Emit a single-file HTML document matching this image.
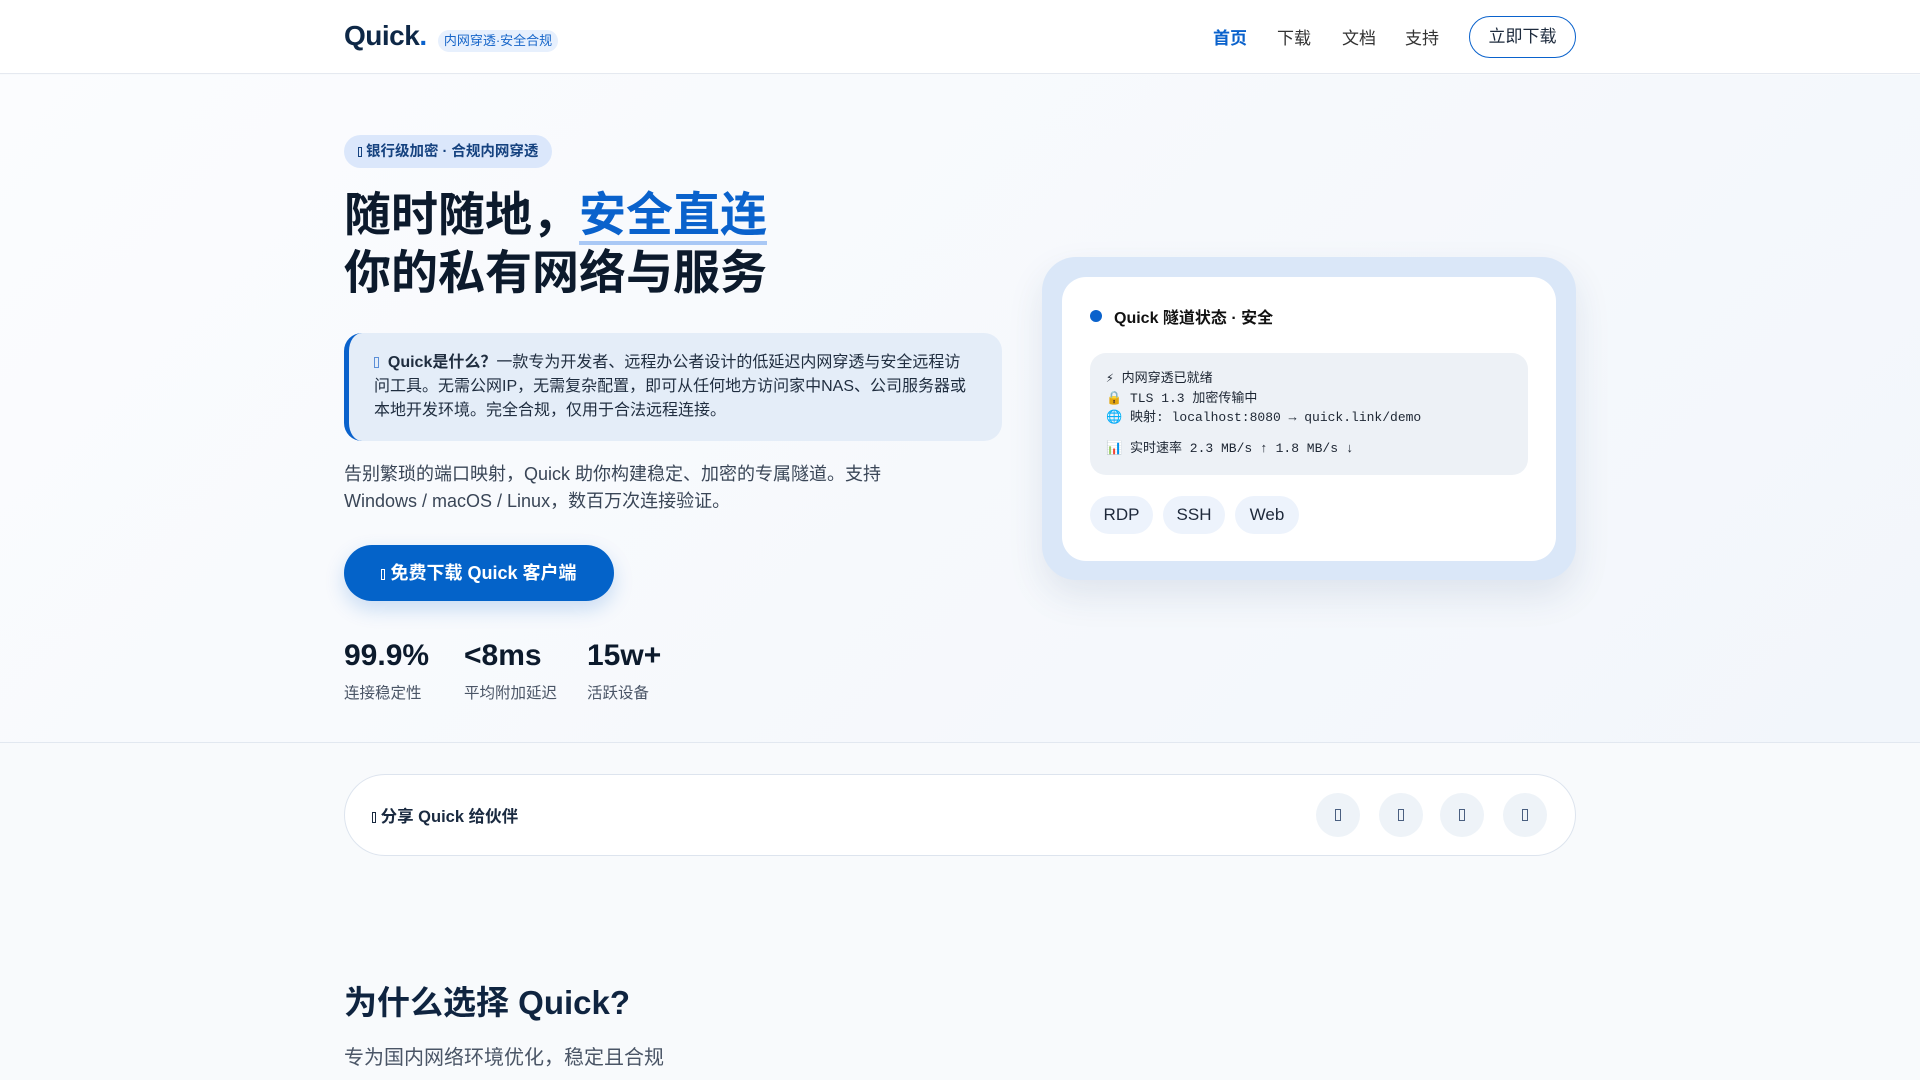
<!DOCTYPE html>
<html><head><meta charset="utf-8"><style>
*{margin:0;padding:0;box-sizing:border-box}
body{width:1920px;height:1080px;overflow:hidden;background:#f8fafc;font-family:"Liberation Sans","Noto Sans CJK SC",sans-serif;color:#0f1e33;position:relative}
.a{position:absolute;white-space:nowrap}
.hdr{position:absolute;left:0;top:0;width:1920px;height:74px;background:#fff;border-bottom:1px solid #e5e9f0}
.hero{position:absolute;left:0;top:75px;width:1920px;height:668px;background:linear-gradient(135deg,#fbfcfe,#f2f6fb);border-bottom:1px solid #e2e8f0}
.tofu{display:inline-block;width:6px;height:12px;border:1.5px solid currentColor;vertical-align:middle}
.pill{position:absolute;top:496px;height:38px;border-radius:19px;background:#edf3fc;font-size:17px;line-height:38px;text-align:center;color:#1e293b}
.circ{position:absolute;top:793px;width:44px;height:44px;border-radius:50%;background:#eef3f8;display:flex;align-items:center;justify-content:center;color:#4a5f80}
</style></head><body>
<div class="hdr"></div>
<div class="a" style="left:344px;top:20px;font-size:28px;font-weight:700;color:#0e2847;letter-spacing:-0.5px">Quick<span style="color:#0a62cc">.</span></div>
<div class="a" style="left:438px;top:30px;height:22px;width:120px;border-radius:11px;background:#e7f0fd;color:#1766c9;font-size:13px;line-height:22px;text-align:center">内网穿透·安全合规</div>
<div class="a" style="left:1213px;top:24px;font-size:17px;color:#0a62cc;font-weight:700">首页</div>
<div class="a" style="left:1277px;top:24px;font-size:17px;color:#333">下载</div>
<div class="a" style="left:1342px;top:24px;font-size:17px;color:#333">文档</div>
<div class="a" style="left:1405px;top:24px;font-size:17px;color:#333">支持</div>
<div class="a" style="left:1469px;top:16px;width:107px;height:42px;border:1.5px solid #0a62cc;border-radius:21px;font-size:17px;color:#1e2b3d;text-align:center;line-height:40px">立即下载</div>

<div class="hero"></div>
<div class="a" style="left:344px;top:135px;width:208px;height:33px;border-radius:17px;background:#dbe7fb;color:#15427f;font-size:14.5px;font-weight:700;line-height:34px;padding-left:14px"><span class="tofu" style="width:4px;height:10px"></span> 银行级加密 · 合规内网穿透</div>
<div class="a" style="left:344px;top:186px;font-size:47px;font-weight:700;line-height:58px;color:#0c1a2c;letter-spacing:0">随时随地，<span style="color:#0a62cc;border-bottom:4px solid #a9c8f5">安全直连</span><br>你的私有网络与服务</div>
<div class="a" style="left:344px;top:333px;width:658px;height:108px;border-radius:18px;background:#e4edf8;border-left:5px solid #0a62cc"></div>
<div class="a" style="left:374px;top:351px;font-size:16px;line-height:24px;color:#1f2d3f;white-space:normal;width:600px"><span class="tofu" style="color:#5b8fd8;width:5px;height:11px"></span>&nbsp; <b>Quick是什么？</b>一款专为开发者、远程办公者设计的低延迟内网穿透与安全远程访问工具。无需公网IP，无需复杂配置，即可从任何地方访问家中NAS、公司服务器或本地开发环境。完全合规，仅用于合法远程连接。</div>
<div class="a" style="left:344px;top:461px;font-size:18px;line-height:27px;color:#3a4657">告别繁琐的端口映射，Quick 助你构建稳定、加密的专属隧道。支持<br>Windows / macOS / Linux，数百万次连接验证。</div>
<div class="a" style="left:344px;top:545px;width:270px;height:56px;border-radius:28px;background:#0463c9;box-shadow:0 8px 20px rgba(10,98,204,.2);color:#fff;font-size:18px;font-weight:700;line-height:56px;text-align:center"><span class="tofu" style="width:4px;height:11px"></span> 免费下载 Quick 客户端</div>
<div class="a" style="left:344px;top:639px;font-size:30px;font-weight:700;color:#0c1a2c">99.9%</div>
<div class="a" style="left:464px;top:639px;font-size:30px;font-weight:700;color:#0c1a2c">&lt;8ms</div>
<div class="a" style="left:587px;top:639px;font-size:30px;font-weight:700;color:#0c1a2c">15w+</div>
<div class="a" style="left:344px;top:681px;font-size:15.5px;color:#4a5566">连接稳定性</div>
<div class="a" style="left:464px;top:681px;font-size:15.5px;color:#4a5566">平均附加延迟</div>
<div class="a" style="left:587px;top:681px;font-size:15.5px;color:#4a5566">活跃设备</div>

<div class="a" style="left:1042px;top:257px;width:534px;height:323px;border-radius:34px;background:#dae7f8;box-shadow:0 16px 36px rgba(30,60,110,.1)"></div>
<div class="a" style="left:1062px;top:277px;width:494px;height:284px;border-radius:24px;background:#fff"></div>
<div class="a" style="left:1090px;top:310px;width:12px;height:12px;border-radius:50%;background:#0a62cc"></div>
<div class="a" style="left:1114px;top:304px;font-size:16px;font-weight:700;color:#111">Quick 隧道状态 · 安全</div>
<div class="a" style="left:1090px;top:353px;width:438px;height:122px;border-radius:16px;background:#edf1f6"></div>
<div class="a" style="left:1106px;top:369px;font-family:'Liberation Mono','Noto Sans CJK SC',monospace;font-size:13px;line-height:19.5px;color:#1d2633">⚡ 内网穿透已就绪<br>🔒 TLS 1.3 加密传输中<br>🌐 映射: localhost:8080 → quick.link/demo<br><span style="display:block;margin-top:11px">📊 实时速率 2.3 MB/s ↑ 1.8 MB/s ↓</span></div>
<div class="pill" style="left:1090px;width:63px">RDP</div>
<div class="pill" style="left:1163px;width:62px">SSH</div>
<div class="pill" style="left:1235px;width:64px">Web</div>

<div class="a" style="left:344px;top:774px;width:1232px;height:82px;border-radius:41px;background:#fff;border:1px solid #dde4ee"></div>
<div class="a" style="left:372px;top:803px;font-size:16.5px;font-weight:700;color:#1a2a40"><span class="tofu" style="width:4px;height:11px"></span> 分享 Quick 给伙伴</div>
<div class="circ" style="left:1316px"><span class="tofu"></span></div>
<div class="circ" style="left:1379px"><span class="tofu"></span></div>
<div class="circ" style="left:1440px"><span class="tofu"></span></div>
<div class="circ" style="left:1503px"><span class="tofu"></span></div>

<div class="a" style="left:344px;top:976px;font-size:33px;font-weight:700;color:#0f2440">为什么选择 Quick?</div>
<div class="a" style="left:344px;top:1041px;font-size:20px;color:#4a5566">专为国内网络环境优化，稳定且合规</div>
</body></html>
